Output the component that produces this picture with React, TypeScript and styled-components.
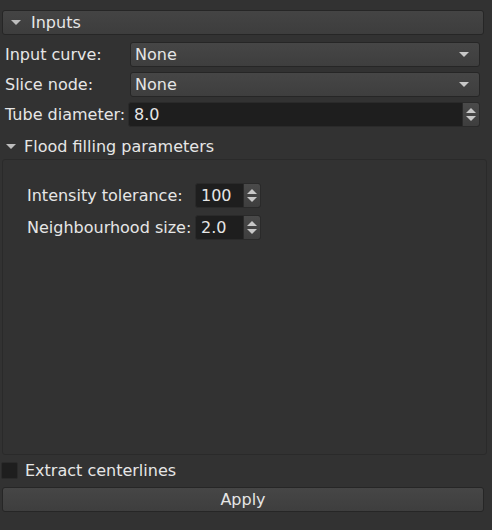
import React from "react";
import styled, { createGlobalStyle } from "styled-components";

const Global = createGlobalStyle`
  html, body { margin: 0; padding: 0; background: #323232; }
  body { font-family: "DejaVu Sans", "Liberation Sans", sans-serif; font-size: 16px; color: #e6e6e6; }
`;

const Page = styled.div`
  width: 492px;
  height: 530px;
  box-sizing: border-box;
  background: #323232;
  display: flex;
  flex-direction: column;
  padding: 10px 0 0 0;
`;

const SectionHeader = styled.div`
  margin: 0 8px 0 2px;
  height: 25px;
  box-sizing: border-box;
  border: 1px solid #262626;
  border-radius: 3px;
  background: linear-gradient(#444444, #3d3d3d);
  display: flex;
  align-items: center;
  padding-left: 8px;
  gap: 10px;
`;

const Tri = styled.span`
  width: 0;
  height: 0;
  border-left: 5px solid transparent;
  border-right: 5px solid transparent;
  border-top: 5px solid #bdbdbd;
`;

const Form = styled.div`
  display: grid;
  grid-template-columns: 123px 1fr;
  row-gap: 5px;
  margin: 7px 12px 0 5px;
  align-items: center;
`;

const Label = styled.div`
  white-space: nowrap;
  line-height: 18px;
`;

const Combo = styled.div`
  height: 25px;
  box-sizing: border-box;
  margin-left: 2px;
  border: 1px solid #262626;
  border-radius: 3px;
  background: linear-gradient(#464646, #3e3e3e);
  display: flex;
  align-items: center;
  padding: 0 10px 0 4px;
  justify-content: space-between;
`;

const SpinWrap = styled.div<{ $w?: number }>`
  height: 25px;
  box-sizing: border-box;
  ${(p) => (p.$w ? `width: ${p.$w}px;` : "")}
  border: 1px solid #2a2a2a;
  border-radius: 3px;
  background: #1e1e1e;
  display: flex;
  align-items: stretch;
  overflow: hidden;
`;

const SpinText = styled.div`
  flex: 1;
  display: flex;
  align-items: center;
  padding-left: 5px;
`;

const SpinBtns = styled.div`
  width: 16px;
  background: linear-gradient(#4a4a4a, #3e3e3e);
  border-left: 1px solid #2a2a2a;
  display: flex;
  flex-direction: column;
  align-items: center;
  justify-content: center;
  gap: 3px;
`;

const Up = styled.span`
  width: 0;
  height: 0;
  border-left: 5px solid transparent;
  border-right: 5px solid transparent;
  border-bottom: 5px solid #c8c8c8;
`;

const Down = styled.span`
  width: 0;
  height: 0;
  border-left: 5px solid transparent;
  border-right: 5px solid transparent;
  border-top: 5px solid #c8c8c8;
`;

const SubHeader = styled.div`
  display: flex;
  align-items: center;
  gap: 8px;
  margin: 9px 0 0 6px;
  height: 20px;
`;

const GroupFrame = styled.div`
  margin: 3px 5px 0 2px;
  height: 296px;
  box-sizing: border-box;
  border: 1px solid #2a2a2a;
  border-radius: 3px;
  padding: 23px 0 0 24px;
`;

const InnerForm = styled.div`
  display: grid;
  grid-template-columns: 168px 66px;
  row-gap: 7px;
  align-items: center;
`;

const CheckRow = styled.div`
  display: flex;
  align-items: center;
  gap: 7px;
  margin: 6px 0 0 1px;
  height: 18px;
`;

const Box = styled.div`
  width: 17px;
  height: 17px;
  box-sizing: border-box;
  border: 1px solid #2a2a2a;
  border-radius: 2px;
  background: #1e1e1e;
`;

const Button = styled.div`
  margin: 8px 8px 0 2px;
  height: 25px;
  box-sizing: border-box;
  border: 1px solid #262626;
  border-radius: 3px;
  background: linear-gradient(#464646, #3e3e3e);
  display: flex;
  align-items: center;
  justify-content: center;
`;

function Spin({ value, w }: { value: string; w?: number }) {
  return (
    <SpinWrap $w={w}>
      <SpinText>{value}</SpinText>
      <SpinBtns>
        <Up />
        <Down />
      </SpinBtns>
    </SpinWrap>
  );
}

export default function App() {
  return (
    <Page>
      <Global />
      <SectionHeader>
        <Tri />
        <span>Inputs</span>
      </SectionHeader>
      <Form>
        <Label>Input curve:</Label>
        <Combo>
          <span>None</span>
          <Down />
        </Combo>
        <Label>Slice node:</Label>
        <Combo>
          <span>None</span>
          <Down />
        </Combo>
        <Label>Tube diameter:</Label>
        <Spin value="8.0" />
      </Form>
      <SubHeader>
        <Tri />
        <span>Flood filling parameters</span>
      </SubHeader>
      <GroupFrame>
        <InnerForm>
          <Label>Intensity tolerance:</Label>
          <Spin value="100" w={66} />
          <Label>Neighbourhood size:</Label>
          <Spin value="2.0" w={66} />
        </InnerForm>
      </GroupFrame>
      <CheckRow>
        <Box />
        <span>Extract centerlines</span>
      </CheckRow>
      <Button>Apply</Button>
    </Page>
  );
}
